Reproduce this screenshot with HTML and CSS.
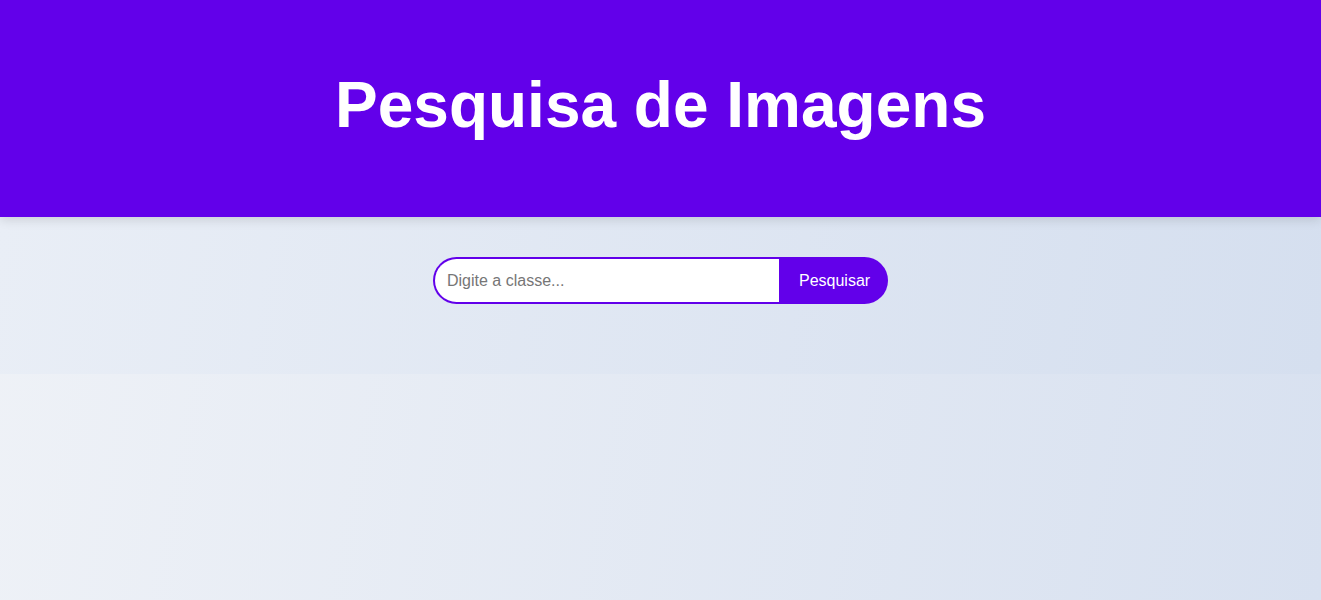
FILE: index.html
```html
<!DOCTYPE html>
<html lang="pt">
<head>
<meta charset="utf-8">
<title>Pesquisa de Imagens</title>
<link rel="stylesheet" href="styles.css">
</head>
<body>
<header class="topbar">
  <h1 class="title">Pesquisa de Imagens</h1>
</header>
<section class="search">
  <form class="search-form">
    <input class="search-input" type="text" placeholder="Digite a classe...">
    <button class="search-btn" type="button">Pesquisar</button>
  </form>
</section>
<main class="results"></main>
</body>
</html>
```
FILE: styles.css
```css
* { box-sizing: border-box; }
html, body { margin: 0; padding: 0; }
body {
  min-height: 100vh;
  font-family: "Liberation Sans", Arial, sans-serif;
  background: linear-gradient(100deg, #eff2f7 0%, #d8e1f0 100%);
}
.topbar {
  background: #6200ea;
  height: 217px;
  padding-top: 68px;
  box-shadow: 0 3px 10px rgba(0, 0, 0, 0.12);
  position: relative;
  z-index: 1;
}
.title {
  margin: 0;
  color: #fff;
  font-size: 64px;
  line-height: 74px;
  font-weight: bold;
  text-align: center;
}
.search {
  height: 157px;
  padding-top: 40px;
  display: flex;
  justify-content: center;
  align-items: flex-start;
  background: linear-gradient(100deg, #e9eef6 0%, #d5dfef 100%);
}
.search-form {
  display: flex;
  height: 47px;
}
.search-input {
  width: 346px;
  height: 47px;
  border: 2px solid #6200ea;
  border-right: none;
  border-radius: 25px 0 0 25px;
  padding: 0 12px;
  font-family: "Liberation Sans", Arial, sans-serif;
  font-size: 16px;
  color: #333;
  background: #fff;
  outline: none;
}
.search-input::placeholder { color: #767676; }
.search-btn {
  width: 109px;
  height: 47px;
  border: none;
  border-radius: 0 25px 25px 0;
  background: #6200ea;
  color: #fff;
  font-family: "Liberation Sans", Arial, sans-serif;
  font-size: 16px;
  padding: 0 20px;
  cursor: pointer;
}
```
